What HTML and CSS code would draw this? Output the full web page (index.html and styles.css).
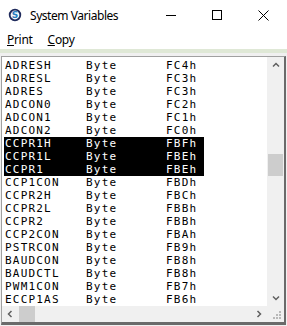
FILE: index.html
```html
<!DOCTYPE html>
<html lang="en">
<head>
    <meta charset="UTF-8">
    <meta name="viewport" content="width=device-width, initial-scale=1.0">
    <title>System Variables</title>
    <link rel="stylesheet" href="styles.css">
</head>
<body>
    <div class="window">
        <div class="titlebar">
            <svg class="app-icon" width="16" height="16" viewBox="0 0 16 16">
                <circle cx="8" cy="8" r="5.3" fill="#f4f7fb" stroke="#1f2a5c" stroke-width="1.8"/>
                <text x="8" y="11.3" text-anchor="middle" class="icon-letter">S</text>
            </svg>
            <span class="title">System Variables</span>
            <div class="controls">
                <span class="ctl ctl-min"></span>
                <span class="ctl ctl-max"></span>
                <span class="ctl ctl-close">
                    <svg width="11" height="11" viewBox="0 0 11 11">
                        <path d="M0.5 0.5 L10.5 10.5 M10.5 0.5 L0.5 10.5" stroke="#000" stroke-width="1"/>
                    </svg>
                </span>
            </div>
        </div>

        <div class="menubar">
            <span class="menu-item"><u>P</u>rint</span>
            <span class="menu-item"><u>C</u>opy</span>
        </div>
        <div class="menu-sep"></div>

        <div class="listbox">
            <div class="list-main">
                <div class="rows" id="rows"></div>
                <div class="vscroll">
                    <svg class="arrow" width="16" height="16" viewBox="0 0 16 16">
                        <path d="M5 9.5 L8 6.5 L11 9.5" fill="none" stroke="#606060" stroke-width="1.5"/>
                    </svg>
                    <div class="vtrack">
                        <div class="vthumb"></div>
                    </div>
                    <svg class="arrow" width="16" height="16" viewBox="0 0 16 16">
                        <path d="M5 6.5 L8 9.5 L11 6.5" fill="none" stroke="#606060" stroke-width="1.5"/>
                    </svg>
                </div>
            </div>
            <div class="list-bottom">
                <div class="hscroll">
                    <svg class="arrow" width="16" height="16" viewBox="0 0 16 16">
                        <path d="M9.5 5 L6.5 8 L9.5 11" fill="none" stroke="#606060" stroke-width="1.5"/>
                    </svg>
                    <div class="htrack">
                        <div class="hthumb"></div>
                    </div>
                    <svg class="arrow" width="16" height="16" viewBox="0 0 16 16">
                        <path d="M6.5 5 L9.5 8 L6.5 11" fill="none" stroke="#606060" stroke-width="1.5"/>
                    </svg>
                </div>
                <svg class="grip" width="17" height="16" viewBox="0 0 17 16">
                    <g fill="#b8b8b8">
                        <rect x="12" y="5" width="2" height="2"/>
                        <rect x="9" y="8" width="2" height="2"/>
                        <rect x="12" y="8" width="2" height="2"/>
                        <rect x="6" y="11" width="2" height="2"/>
                        <rect x="9" y="11" width="2" height="2"/>
                        <rect x="12" y="11" width="2" height="2"/>
                    </g>
                </svg>
            </div>
        </div>
    </div>

    <script>
        const variables = [
            ["ADRESH", "Byte", "FC4h"],
            ["ADRESL", "Byte", "FC3h"],
            ["ADRES", "Byte", "FC3h"],
            ["ADCON0", "Byte", "FC2h"],
            ["ADCON1", "Byte", "FC1h"],
            ["ADCON2", "Byte", "FC0h"],
            ["CCPR1H", "Byte", "FBFh", true],
            ["CCPR1L", "Byte", "FBEh", true],
            ["CCPR1", "Byte", "FBEh", true],
            ["CCP1CON", "Byte", "FBDh"],
            ["CCPR2H", "Byte", "FBCh"],
            ["CCPR2L", "Byte", "FBBh"],
            ["CCPR2", "Byte", "FBBh"],
            ["CCP2CON", "Byte", "FBAh"],
            ["PSTRCON", "Byte", "FB9h"],
            ["BAUDCON", "Byte", "FB8h"],
            ["BAUDCTL", "Byte", "FB8h"],
            ["PWM1CON", "Byte", "FB7h"],
            ["ECCP1AS", "Byte", "FB6h"]
        ];

        const rows = document.getElementById("rows");
        variables.forEach(v => {
            const row = document.createElement("div");
            row.className = v[3] ? "row selected" : "row";
            row.innerHTML = `<span>${v[0]}</span><span>${v[1]}</span><span>${v[2]}</span>`;
            rows.appendChild(row);
        });
    </script>
</body>
</html>
```

FILE: styles.css
```css
body {
    margin: 0;
    background-color: #ffffff;
}
.window {
    width: 287px;
    height: 326px;
    background-color: #f0f0f0;
    display: flex;
    flex-direction: column;
    font-family: 'Noto Sans', sans-serif;
}
.titlebar {
    height: 30px;
    background-color: #ffffff;
    display: flex;
    align-items: center;
    padding-left: 7px;
}
.app-icon {
    flex: none;
}
.icon-letter {
    font-family: 'DejaVu Sans', sans-serif;
    font-size: 9px;
    font-weight: bold;
    fill: #2a7dc0;
}
.title {
    margin-left: 7px;
    font-size: 12px;
    letter-spacing: -0.45px;
    color: #000;
}
.controls {
    margin-left: auto;
    margin-right: 1px;
    display: flex;
    height: 30px;
}
.ctl {
    width: 46px;
    height: 30px;
    display: flex;
    align-items: center;
    justify-content: center;
}
.ctl-min::before {
    content: "";
    width: 10px;
    height: 1px;
    background-color: #000;
}
.ctl-max::before {
    content: "";
    width: 8px;
    height: 8px;
    border: 1px solid #000;
}
.menubar {
    height: 19px;
    background-color: #ffffff;
    display: flex;
    align-items: center;
    padding-left: 7px;
    gap: 15px;
    font-size: 12px;
    letter-spacing: -0.3px;
}
.menu-item u {
    text-decoration-thickness: 1px;
    text-underline-offset: 1px;
}
.menu-sep {
    height: 4px;
    background-color: #dfe8d6;
    margin-bottom: 3px;
}
.listbox {
    flex: 1;
    margin-left: 1px;
    border-top: 1px solid #a0a0a0;
    border-left: 1px solid #a0a0a0;
    border-right: 2px solid #6a6a6a;
    border-bottom: 3px solid #6a6a6a;
    margin-right: 1px;
    margin-bottom: 1px;
    background-color: #ffffff;
    display: flex;
    flex-direction: column;
    min-height: 0;
}
.list-main {
    flex: 1;
    display: flex;
    min-height: 0;
}
.rows {
    flex: 1;
    padding: 2px 0 0 2px;
    font-family: 'DejaVu Sans Mono', monospace;
    font-size: 11px;
    letter-spacing: 1.2px;
    color: #000;
}
.row {
    width: 200px;
    height: 13px;
    line-height: 13px;
    display: grid;
    grid-template-columns: 81px 80px 1fr;
    padding-left: 1px;
    box-sizing: border-box;
}
.row.selected {
    background-color: #000;
    color: #fff;
}
.vscroll {
    width: 17px;
    background-color: #f0f0f0;
    display: flex;
    flex-direction: column;
    align-items: center;
}
.arrow {
    flex: none;
}
.vtrack {
    flex: 1;
    width: 100%;
    padding-top: 81px;
}
.vthumb {
    width: 15px;
    height: 22px;
    margin-left: 1px;
    background-color: #cdcdcd;
}
.list-bottom {
    height: 16px;
    display: flex;
    background-color: #f0f0f0;
}
.hscroll {
    flex: 1;
    display: flex;
    align-items: center;
}
.htrack {
    flex: 1;
    height: 100%;
}
.hthumb {
    width: 16px;
    height: 100%;
    margin-left: 1px;
    background-color: #cdcdcd;
}
.grip {
    flex: none;
}
```
